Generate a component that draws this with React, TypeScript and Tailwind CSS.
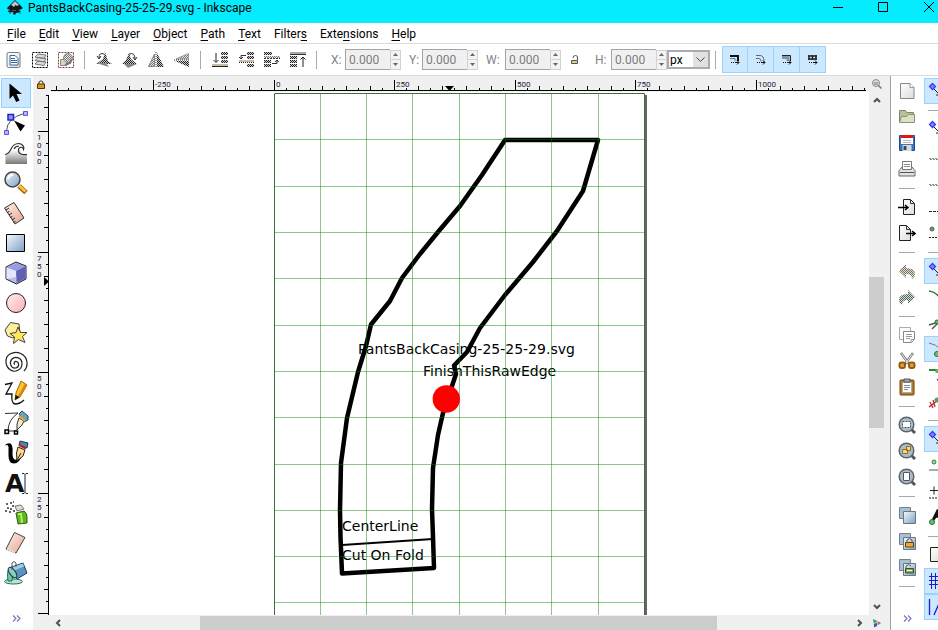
import { Fragment, type ReactNode } from "react";

type IconProps = { children: ReactNode; size?: "sm" | "md" };

function Icon({ children, size = "md" }: IconProps) {
  return (
    <svg
      viewBox={size === "md" ? "0 0 24 24" : "0 0 18 18"}
      className={size === "md" ? "h-6 w-6 shrink-0 overflow-visible" : "h-[18px] w-[18px] shrink-0"}
      fill="none"
      aria-hidden="true"
    >
      {children}
    </svg>
  );
}

function Defs() {
  return (
    <svg className="absolute h-0 w-0" aria-hidden="true">
      <defs>
        <pattern id="dither" width="2" height="2" patternUnits="userSpaceOnUse">
          <path d="M0 0h1v1H0zM1 1h1v1H1z" fill="#222" />
          <path d="M1 0h1v1H1zM0 1h1v1H0z" fill="#c9c9c9" />
        </pattern>
        <pattern id="dither-light" width="2" height="2" patternUnits="userSpaceOnUse">
          <path d="M0 0h1v1H0zM1 1h1v1H1z" fill="#777" />
          <path d="M1 0h1v1H1zM0 1h1v1H0z" fill="#e8e8e4" />
        </pattern>
        <pattern id="dither-olive" width="2" height="2" patternUnits="userSpaceOnUse">
          <path d="M0 0h1v1H0zM1 1h1v1H1z" fill="#76725f" />
          <path d="M1 0h1v1H1zM0 1h1v1H0z" fill="#e2dfd2" />
        </pattern>
        <pattern id="dither-green" width="2" height="2" patternUnits="userSpaceOnUse">
          <path d="M0 0h1v1H0zM1 1h1v1H1z" fill="#566656" />
          <path d="M1 0h1v1H1zM0 1h1v1H0z" fill="#d8e0d6" />
        </pattern>
        <linearGradient id="blue" x1="0" y1="0" x2="1" y2="1">
          <stop offset="0" stopColor="#f4f9fd" />
          <stop offset="1" stopColor="#7f9fc4" />
        </linearGradient>
        <linearGradient id="pink" x1="0" y1="0" x2="1" y2="1">
          <stop offset="0" stopColor="#ffeef0" />
          <stop offset="1" stopColor="#ffadb4" />
        </linearGradient>
        <linearGradient id="peach" x1="0" y1="0" x2="1" y2="1">
          <stop offset="0" stopColor="#fff1ec" />
          <stop offset="1" stopColor="#e6a38e" />
        </linearGradient>
        <linearGradient id="wave" x1="0" y1="0" x2="0" y2="1">
          <stop offset="0.3" stopColor="#ffffff" />
          <stop offset="1" stopColor="#777777" />
        </linearGradient>
        <linearGradient id="page" x1="0" y1="0" x2="1" y2="1">
          <stop offset="0" stopColor="#ffffff" />
          <stop offset="1" stopColor="#dcdcd8" />
        </linearGradient>
      </defs>
    </svg>
  );
}

/* ---- menu ---- */

const MENUS = [
  ["", "F", "ile"],
  ["", "E", "dit"],
  ["", "V", "iew"],
  ["", "L", "ayer"],
  ["", "O", "bject"],
  ["", "P", "ath"],
  ["", "T", "ext"],
  ["Filter", "s", ""],
  ["Exte", "n", "sions"],
  ["", "H", "elp"],
];

function TitleBar() {
  return (
    <header className="flex h-[23px] shrink-0 items-start bg-[#05ecff] pl-[6px]">
      <svg viewBox="0 0 18 16" className="h-4 w-[18px] shrink-0" aria-hidden="true">
        <path d="M9 0 16.500 7.500Q17 9 14.500 9.500L12 10l3 1-2 1.500-3 .5-1 2-2-1 .500-2-4 .500-2-1.500 3-1L1.500 9Q.500 8 2 7z" fill="#15161a" />
        <path d="M9 1 13 5 11 6 9.500 5 8 7 6 5.500 5 5z" fill="#b9c4cc" />
        <path d="M6 10.500h4M3 13h2M13 13h2" stroke="#45525c" />
      </svg>
      <h1 className="ml-1 flex-1 truncate text-xs leading-4">PantsBackCasing-25-25-29.svg - Inkscape</h1>
      <button aria-label="Minimize" className="flex h-4 w-[45px] items-center justify-center">
        <svg viewBox="0 0 10 10" className="h-[10px] w-[10px]"><path d="M0 4.500h10" stroke="#000" /></svg>
      </button>
      <button aria-label="Maximize" className="flex h-[14px] w-[45px] items-center justify-center">
        <svg viewBox="0 0 10 10" className="h-[10px] w-[10px]" fill="none"><path d="M.500 .500h9v9h-9z" stroke="#000" /></svg>
      </button>
      <button aria-label="Close" className="flex h-[14px] w-[33px] items-center justify-end pr-1">
        <svg viewBox="0 0 10 10" className="h-[10px] w-[10px]"><path d="M0 0 10 10M10 0 0 10" stroke="#000" /></svg>
      </button>
    </header>
  );
}

function MenuBar() {
  return (
    <nav aria-label="Main menu" className="flex h-[21px] shrink-0 items-center gap-px border-b border-[#dadada] pl-px pt-px">
      {MENUS.map(([before, key, after]) => (
        <button key={before + key + after} className="px-[6px] text-xs leading-5">
          {before}
          <span className="underline underline-offset-2">{key}</span>
          {after}
        </button>
      ))}
    </nav>
  );
}

/* ---- control bar ---- */

const SELECT_ACTIONS = [
  {
    label: "Select all",
    icon: (
      <>
        <rect x="2" y="1.500" width="13" height="15" rx="1.500" fill="url(#page)" stroke="#777b76" />
        <path d="M5 4.500h5l3 3V14H5z" fill="#fff" stroke="#3465a4" />
        <path d="M6 7.500h4M6 9.500h6M6 11.500h6" stroke="#3465a4" />
      </>
    ),
  },
  {
    label: "Select all in all layers",
    icon: (
      <>
        <rect x="1.500" y="1.500" width="15" height="15" stroke="#000" strokeDasharray="2 1" />
        <path d="m4 13 3-3 8 1-2 3.500zM4 9.500l3-3 8 1-2 3.500zM4 6l3-3 8 1-2 3.500z" fill="#ddd" stroke="#777" />
      </>
    ),
  },
  {
    label: "Deselect",
    icon: (
      <>
        <rect x="1.500" y="1.500" width="15" height="15" stroke="#854040" strokeDasharray="2 1" />
        <path d="M3.500 8.500h6v6h-6z" fill="#ded5b8" stroke="#888" />
        <circle cx="11" cy="7" r="4.500" fill="url(#dither-light)" stroke="#888" />
        <path d="m8 14 5-2 2-4" stroke="#777" strokeWidth="2" />
      </>
    ),
  },
];

const TRANSFORM_ACTIONS = [
  {
    label: "Rotate counter-clockwise",
    icon: (
      <>
        <path d="M1 13h16l-4-3-3-9-2 7z" fill="url(#dither)" />
        <path d="M1 12h10l3 4z" fill="#888" />
        <path d="M9 3Q4 1 4 7M2 5l2 3 2-3" stroke="#333" />
      </>
    ),
  },
  {
    label: "Rotate clockwise",
    icon: (
      <>
        <path d="M1 13h15l-6-5-2-6-3 7z" fill="url(#dither)" />
        <path d="M3 13h13l-9 4z" fill="#888" />
        <path d="M8 3q6-2 6 5M12 6l2 3 2-3" stroke="#333" />
      </>
    ),
  },
  {
    label: "Flip horizontal",
    icon: (
      <>
        <path d="M7.500 3v12.500H1.500z" fill="url(#dither-light)" stroke="#888" />
        <path d="M10 2v14h7z" fill="url(#dither)" />
        <path d="M9 1v16" stroke="#333" strokeDasharray="1 1" />
      </>
    ),
  },
  {
    label: "Flip vertical",
    icon: (
      <>
        <path d="M15.500 2.500v5.500H3z" fill="url(#dither-light)" stroke="#999" />
        <path d="M16 10v6L2 10z" fill="url(#dither)" />
        <path d="M1 9h16" stroke="#222" strokeDasharray="1 1" />
      </>
    ),
  },
];

const ORDER_ACTIONS = [
  {
    label: "Lower to bottom",
    icon: (
      <>
        <path d="M10 1h7v3h-7zM10 5h7v3h-7zM10 9h7v3h-7z" fill="url(#dither)" />
        <path d="M1 13h16v2H1z" fill="#c5bd9d" />
        <path d="M1 15.500h16M5 2v9M2.500 9 5 11.500 7.500 9" stroke="#222" />
      </>
    ),
  },
  {
    label: "Lower",
    icon: (
      <>
        <path d="M10 1h7v3h-7zM10 5h7v3h-7zM10 13h7v3h-7z" fill="url(#dither)" />
        <path d="M2 9h15v2H2z" fill="#c5bd9d" />
        <path d="M2 11.500h15" stroke="#222" strokeDasharray="1 1" />
        <path d="M9 4.500H4V8M2 6l2 2 2-2" stroke="#333" />
      </>
    ),
  },
  {
    label: "Raise",
    icon: (
      <>
        <path d="M1 1h8v3H1zM1 9h7v3H1zM1 13h7v3H1z" fill="url(#dither)" />
        <path d="M1 5h16v2H1z" fill="url(#dither-light)" />
        <path d="M1 7.500h16" stroke="#333" strokeDasharray="2 1" />
        <path d="M9 12.500h5V9M12 11l2-2 2 2" stroke="#333" />
      </>
    ),
  },
  {
    label: "Raise to top",
    icon: (
      <>
        <path d="M1 1h16v2H1z" fill="#aaa" />
        <path d="M1 3.500h16" stroke="#333" />
        <path d="M1 5h7v3H1zM1 9h7v3H1zM1 13h7v3H1z" fill="url(#dither)" />
        <path d="M14 16V6M11.500 8.500 14 6l2.500 2.500" stroke="#222" />
      </>
    ),
  },
];

const SCALE_TOGGLES = [
  {
    label: "Scale stroke width",
    icon: (
      <>
        <path d="M4 5h8v5" stroke="#111" strokeWidth="2" />
        <path d="M4 7.500h5V10" stroke="#777" />
      </>
    ),
  },
  {
    label: "Scale rounded corners",
    icon: <path d="M4 4.500h4q4 0 4 6M4 7.500h3q2 0 2 3" stroke="#667" />,
  },
  {
    label: "Move gradients",
    icon: (
      <>
        <path d="M4 6.500h6V10" stroke="#8493a8" strokeWidth="3" />
        <path d="M4 4.500h8.500V10" stroke="#222" />
      </>
    ),
  },
  {
    label: "Move patterns",
    icon: <path d="M4 5h9M4 8h9M5 4v5M8.500 4v5M12 4v5" stroke="#222" strokeWidth="1.500" />,
  },
];

type Action = { label: string; icon: ReactNode };

function ActionGroup({ actions }: { actions: Action[] }) {
  return (
    <div className="flex">
      {actions.map((a) => (
        <button key={a.label} aria-label={a.label} className="flex h-7 w-[26px] items-center justify-center">
          <Icon size="sm">{a.icon}</Icon>
        </button>
      ))}
    </div>
  );
}

function Divider() {
  return <div className="ml-[5px] mr-[6px] h-[18px] w-px shrink-0 bg-[#aaa]" />;
}

function NumberField({ name, width }: { name: string; width: string }) {
  return (
    <div className="flex items-center">
      <label htmlFor={`field-${name}`} className={`${width} shrink-0 text-xs text-[#80848a]`}>
        {name}:
      </label>
      <input
        id={`field-${name}`}
        defaultValue="0.000"
        className="h-[21px] w-[45px] rounded-none border border-r-0 border-[#a4a4a4] bg-[#f0f0f0] px-[3px] text-xs text-[#7c7c7c] outline-none"
      />
      <div className="flex h-5 w-[11px] flex-col border border-[#d2d2d2] bg-[#f3f3f3]">
        <button aria-label={`Increase ${name}`} className="flex flex-1 items-center justify-center border-b border-[#d2d2d2]">
          <svg viewBox="0 0 5 3" className="h-[3px] w-[5px]"><path d="M0 3 2.500 0 5 3z" fill="#666" /></svg>
        </button>
        <button aria-label={`Decrease ${name}`} className="flex flex-1 items-center justify-center">
          <svg viewBox="0 0 5 3" className="h-[3px] w-[5px]"><path d="M0 0 2.500 3 5 0z" fill="#666" /></svg>
        </button>
      </div>
    </div>
  );
}

function ControlBar() {
  return (
    <div role="toolbar" aria-label="Selection controls" className="flex h-8 shrink-0 items-center border-b border-[#dadada] pl-px">
      <ActionGroup actions={SELECT_ACTIONS} />
      <Divider />
      <ActionGroup actions={TRANSFORM_ACTIONS} />
      <Divider />
      <ActionGroup actions={ORDER_ACTIONS} />
      <Divider />
      <div className="flex items-center pl-2">
        <div className="flex gap-2">
          <NumberField name="X" width="w-[14px]" />
          <NumberField name="Y" width="w-[13px]" />
          <NumberField name="W" width="w-[19px]" />
        </div>
        <button aria-label="Lock width and height" className="flex h-7 w-[34px] items-center justify-center pr-[6px]">
          <svg viewBox="0 0 10 12" className="h-3 w-[10px]" fill="none">
            <path d="M3 4q0-2.500 2.500-2.500T7.500 4v2" stroke="#555" />
            <path d="M1.500 6.500h6v3h-6z" fill="#e6cf7c" stroke="#555" />
          </svg>
        </button>
        <NumberField name="H" width="w-4" />
        <div className="relative h-[19px] w-[43px]">
          <select aria-label="Unit" defaultValue="px" className="block h-full w-full appearance-none rounded-none border-2 border-[#aaaab2] bg-white pl-px text-xs leading-none outline-none">
            <option>px</option>
            <option>mm</option>
            <option>in</option>
          </select>
          <span className="pointer-events-none absolute inset-y-[2px] right-[2px] flex w-[15px] items-center justify-center bg-[#e1e1e1]">
            <svg viewBox="0 0 9 5" className="h-[5px] w-[9px]" fill="none"><path d="m.500 .500 4 4 4-4" stroke="#444" /></svg>
          </span>
        </div>
      </div>
      <Divider />
      <div className="flex">
        {SCALE_TOGGLES.map((t, i) => (
          <button
            key={t.label}
            aria-label={t.label}
            aria-pressed="true"
            className={`flex h-[27px] items-center justify-center border border-[#99d1ff] bg-[#cce8ff] ${i === 0 ? "w-[26px]" : "w-[26px] border-l-0"}`}
          >
            <Icon size="sm">
              {t.icon}
              <path d="M5 11.500h5" stroke="#111" strokeDasharray="1 1" />
              <path d="M10 11.500h3M11 9.500l2 2-2 2" stroke="#111" />
            </Icon>
          </button>
        ))}
      </div>
    </div>
  );
}

/* ---- toolbox ---- */

const TOOLS: Action[] = [
  { label: "Select", icon: <path d="M5.500 2.500V18l3.500-3.500 3.200 6.500 3.300-1.500-3-6.500H18z" fill="#000" /> },
  {
    label: "Edit nodes",
    icon: (
      <>
        <path d="M2.500 20Q3 7 20 2.500" stroke="#555" />
        <path d="M4 3.500h5.500V9H4z" fill="#8c94ff" stroke="#2222cc" strokeWidth="1.500" />
        <path d="M19.500.500h4v4h-4zM.500 19.500h4v4h-4z" fill="#b4b4ff" stroke="#5555dd" />
        <path d="m10 9.500 11 5-4.500 6z" fill="#000" />
      </>
    ),
  },
  {
    label: "Tweak",
    icon: (
      <>
        <path d="M1.500 23V13C6 13 6 9 8.500 5.500 11 2 17 1 19.500 5.500c.5 1 .5 2 0 3-.5-3-4-3-5-.5 3-1 4 3 1.500 4 2 1.500 4 .5 7 1V23z" fill="url(#wave)" />
        <path d="M1 13.500C6 13 6 9 8.500 5.500 11 2 17 1 19.500 5.500c.5 1 .5 2 0 3-.5-3-4.500-3-5 0-.5 4 3 5.500 8.500 5M10 8c1-2 3-3 5-3" stroke="#333" strokeWidth="1.200" />
      </>
    ),
  },
  {
    label: "Zoom",
    icon: (
      <>
        <path d="m15 15 7 6.500" stroke="#996515" strokeWidth="5" />
        <path d="m15 14.500 6.500 6" stroke="#ffc040" strokeWidth="3" />
        <circle cx="8.500" cy="8.500" r="7.500" fill="url(#blue)" stroke="#444" strokeWidth="1.500" />
        <path d="M4 8q1-4 5-4" stroke="#fff" strokeWidth="2" />
      </>
    ),
  },
  {
    label: "Measure",
    icon: (
      <>
        <path d="M.500 7 10 1.500 20 17l-9 6z" fill="url(#peach)" stroke="#333" />
        <path d="m2 9 3-2m-1.500 4.500 2-1.200M5 14l3-2m-1.500 4.500 2-1.200M8 19l3-2m-1.500 4.500 2-1.200" stroke="#222" />
      </>
    ),
  },
  { label: "Rectangle", icon: <path d="M2.500 3.500h18v17h-18z" fill="url(#blue)" stroke="#000" /> },
  {
    label: "3D box",
    icon: (
      <>
        <path d="m2 6 10-5 10 4v13l-9.500 5L2 18z" fill="#b9bcf0" stroke="#222" />
        <path d="m2.500 6.500 9.500-4V16l-9.500 2z" fill="#e4e5fb" />
        <path d="m12 2.500 9.500 3v12L12 15z" fill="#7f83cf" />
        <path d="m2.500 6.500 9.500-4 9.500 3-9 4.500z" fill="#9a9de0" />
        <path d="M12.500 10 21.500 5.500v12L12.500 22z" fill="#5e61b4" />
      </>
    ),
  },
  { label: "Ellipse", icon: <circle cx="12" cy="12" r="9.500" fill="url(#pink)" stroke="#222" /> },
  {
    label: "Star",
    icon: (
      <>
        <path d="M1 9 6.500 1.500 15 3l1 9-7 5-5.500-2z" fill="#ffee9b" stroke="#444" />
        <path d="m14 6 2.500 5.500 6.500 0-4.500 4 2.500 6-6.500-3-5 4 1-6.500-4.500-3.500 6-1z" fill="#ffe75c" stroke="#444" />
      </>
    ),
  },
  {
    label: "Spiral",
    icon: <path d="M11 13.500c-2-1-.5-3.500 1.500-3 3 .8 3 6-1 6.500-5 .5-6.500-6-3.500-9C11.500 4.500 18 7 18 12.500 18 19 11 22 6.500 19 .5 15 .5 6 6 3c7-4 16 0 17 8 .4 4-1 7-3 9" stroke="#222" strokeWidth="1.200" />,
  },
  {
    label: "Pencil",
    icon: (
      <>
        <path d="M1 3.500 8 2 2 13h6q-1 9 3 10 5 0 9-4" stroke="#111" strokeWidth="1.300" />
        <path d="m17 0 6 4-7 12-5 3 1-7z" fill="#ffc32e" stroke="#9a680d" />
        <path d="m21 2.500 2 1.500-7 12-2-1z" fill="#d88a08" />
        <path d="m11 19 .5-5 4 2z" fill="#111" />
      </>
    ),
  },
  {
    label: "Bezier pen",
    icon: (
      <>
        <path d="M1 2.500 14 2Q4 9 4 20h8" stroke="#333" />
        <path d="m15 3 3-3 6 5v4l-4 2z" fill="#6ba3c2" stroke="#27465a" />
        <path d="m15 7 5 3-2 4-5 5 0-6z" fill="#f3e9ca" stroke="#333" />
        <path d="m15 5 6 5" stroke="#e8aa22" strokeWidth="2" />
        <path d="M1 19h3.500v3.500H1zM10.500 20h3v3h-3z" fill="#fff" stroke="#000" strokeWidth="1.500" />
      </>
    ),
  },
  {
    label: "Calligraphy",
    icon: (
      <>
        <path d="M1.500 3.500q5-3 6.500 1 1 3 .5 8 0 7 4 6l6-5q-3 9-8.500 9-5.500 0-5.500-8V6Q4 3 1.500 4.500z" fill="#000" />
        <path d="m16 0 8 2-1 5-8-3z" fill="#4c86b3" stroke="#17384e" />
        <path d="m15 4 7 3.500" stroke="#b42318" strokeWidth="2" />
        <path d="m14 6 7 3-2 6-6 5-.5-8z" fill="#ffd98a" stroke="#222" />
        <path d="m13 19 4-7" stroke="#222" />
      </>
    ),
  },
  {
    label: "Text",
    icon: (
      <>
        <text x="1" y="21" fontFamily="DejaVu Sans" fontWeight="700" fontSize="25" fill="#111">A</text>
        <path d="M18 2.500h2l1 1 1-1h2M18 22.500h2l1-1 1 1h2M21 3.500v18" stroke="#222" />
      </>
    ),
  },
  {
    label: "Spray",
    icon: (
      <>
        <path d="m12 12 8-2q3 2 3 6v6l-9 1z" fill="#61b51d" stroke="#315d0c" />
        <path d="m14 13 3 0 1 9" stroke="#b6ed70" strokeWidth="2" />
        <path d="m11 5 6-1 3 4-7 2z" fill="#ddd" stroke="#777" />
        <path d="M2 3h2M6 2h2M8 5h2M3 7h2M6 8h2M1 10h2M9 10h2M5 11h2M9 1h1" stroke="#333" strokeWidth="1.500" />
      </>
    ),
  },
  {
    label: "Eraser",
    icon: (
      <>
        <path d="M2 18 10.500 1.500 21 6.500 12 22z" fill="url(#peach)" stroke="#444" />
        <path d="m3 18 8 3.500" stroke="#fff" />
      </>
    ),
  },
  {
    label: "Paint bucket",
    icon: (
      <>
        <ellipse cx="9.500" cy="20.500" rx="9" ry="2.500" fill="#b5e4cf" stroke="#286f59" />
        <path d="M4 9q-1 7 0 11h4q0-5 2-8z" fill="#6fc7a7" stroke="#286f59" />
        <path d="m5 7 14-5 4 10-10 6z" fill="#5b93c0" stroke="#163a57" />
        <path d="m9 6 10-3.500 1 3-10 4z" fill="#a5cde6" />
        <ellipse cx="8.500" cy="11.500" rx="2.800" ry="6" transform="rotate(-35 8.500 11.500)" fill="#8fd0bb" stroke="#163a57" />
        <path d="M8 9V2q2-3 4 0v4" stroke="#555" />
      </>
    ),
  },
];

function More() {
  return (
    <button aria-label="More" className="flex h-5 w-full items-center justify-center">
      <svg viewBox="0 0 9 7" className="h-[7px] w-[9px]" fill="none">
        <path d="m1 .500 3 3-3 3M5 .500l3 3-3 3" stroke="#7777b8" strokeWidth="1.200" />
      </svg>
    </button>
  );
}

function Toolbox() {
  return (
    <div role="toolbar" aria-label="Tools" className="flex w-[33px] shrink-0 flex-col pl-px pt-[2px]">
      {TOOLS.map((t, i) => (
        <button
          key={t.label}
          aria-label={t.label}
          className={`flex h-[30px] w-[30px] shrink-0 items-center justify-center ${i === 0 ? "border border-[#99d1ff] bg-[#cce8ff]" : ""}`}
        >
          <Icon>{t.icon}</Icon>
        </button>
      ))}
      <div className="mt-5 w-[30px]">
        <More />
      </div>
    </div>
  );
}

/* ---- canvas and rulers ---- */

const STEP = 12.06;

function tickLength(i: number) {
  if (i % 10 === 0) return 11;
  return i % 2 === 0 ? 5 : 3;
}

function HorizontalRuler() {
  const ticks = Array.from({ length: 68 }, (_, n) => n - 18);
  return (
    <svg className="h-4 w-full bg-[#f0f0f0]" aria-hidden="true">
      <path d="M2 14.500H817" stroke="#000" />
      {ticks.map((i) => {
        const x = Math.floor(225 + i * STEP);
        return x > 2 && x < 818 ? <rect key={i} x={x} y={15 - tickLength(i)} width="1" height={tickLength(i)} /> : null;
      })}
      {[-250, 0, 250, 500, 750, 1000].map((v) => (
        <text key={v} x={Math.floor(227 + (v / 25) * STEP)} y="11" fontSize="8" fill="#202038">
          {v}
        </text>
      ))}
      <path d="M396 10h9l-4.500 5z" fill="#000" />
    </svg>
  );
}

function VerticalRuler() {
  const ticks = Array.from({ length: 44 }, (_, n) => n - 3);
  return (
    <svg className="h-full w-4 bg-[#f0f0f0]" aria-hidden="true">
      <path d="M15.500 3V523" stroke="#000" />
      {ticks.map((i) => (
        <rect key={i} x={16 - tickLength(i)} y={Math.round(39 + i * STEP)} width={tickLength(i)} height="1" />
      ))}
      {["1000", "750", "500", "250"].map((label, n) => (
        <text key={label} y={Math.round(48 + n * 10 * STEP)} fontSize="8" fill="#202038">
          {label.split("").map((digit, d) => (
            <tspan key={d} x="4" dy={d === 0 ? 0 : 8}>
              {digit}
            </tspan>
          ))}
        </text>
      ))}
      <path d="M11 185v9l5-4.500z" fill="#000" />
    </svg>
  );
}

const GRID = 46.3;

function Drawing() {
  const columns = Array.from({ length: 7 }, (_, n) => Math.round(273.5 + (n + 1) * GRID) + 0.5);
  const rows = Array.from({ length: 11 }, (_, n) => Math.round(139.4 + n * GRID) + 0.5);
  return (
    <svg className="h-full w-full bg-white" role="img" aria-label="Pattern drawing">
      <g transform="translate(-49 -92)" fill="none">
        <path d="M645 95h2v520h-2z" fill="#666" />
        <path
          d="M505 140H598L583 191 557 231 533 262 505 295 480 328 467 352 454 365.500 456 374 443 413 438 435 433 468 432 509 433 537 434 568 342 573.500 340.500 537 340 510 341 463 347 418 358 372 366 346 371 324.500 390 301 402 278 420 254 438 232 460 206 482 175z"
          stroke="#000"
          strokeWidth="4.500"
          strokeLinejoin="round"
        />
        <path d="m342 545 91-6" stroke="#000" strokeWidth="2" />
        <g fill="#000" fontFamily="DejaVu Sans, Verdana, sans-serif" fontSize="14">
          <text x="358" y="354">PantsBackCasing-25-25-29.svg</text>
          <text x="423" y="376">FinishThisRawEdge</text>
          <text x="342" y="531">CenterLine</text>
          <text x="342" y="560">Cut On Fold</text>
        </g>
        <g stroke="#008000" strokeOpacity="0.45">
          {columns.map((x) => (
            <path key={x} d={`M${x} 94V615`} />
          ))}
          {rows.map((y) => (
            <path key={y} d={`M274 ${y}H645`} />
          ))}
        </g>
        <circle cx="446.300" cy="399" r="13.700" fill="#f00" />
        <path d="M274.500 615V93.500H644.500V615" stroke="#3c6e3c" />
      </g>
    </svg>
  );
}

function Chevron({ d }: { d: string }) {
  return (
    <svg viewBox="0 0 8 8" className="h-2 w-2 shrink-0" fill="none" aria-hidden="true">
      <path d={d} stroke="#505050" strokeWidth="2" />
    </svg>
  );
}

function Desk() {
  return (
    <main className="grid min-w-0 flex-1 grid-cols-[16px_minmax(0,1fr)_21px] grid-rows-[16px_minmax(0,1fr)_15px] bg-[#f0f0f0]">
      <button aria-label="Lock guides" className="flex items-center justify-center">
        <svg viewBox="0 0 8 9" className="h-[9px] w-2" fill="none">
          <path d="M2 4V2q2-2.500 4 0v2" stroke="#333" />
          <path d="M.500 4h7v4.500h-7z" fill="#d99a24" stroke="#4d3200" />
        </svg>
      </button>
      <HorizontalRuler />
      <button aria-label="Zoom drawing" className="flex items-center pl-[3px]">
        <svg viewBox="0 0 10 10" className="h-[10px] w-[10px]" fill="none">
          <circle cx="4" cy="4" r="3.500" fill="#ddd" stroke="#888" />
          <path d="M3 3v3M5 3v3" stroke="#777" />
          <path d="m6.500 6.500 3 3" stroke="#777" strokeWidth="1.500" />
        </svg>
      </button>

      <VerticalRuler />
      <Drawing />
      <div className="flex w-[15px] flex-col items-center py-1">
        <Chevron d="m1 6 3-3 3 3" />
        <div className="flex w-full flex-1 flex-col pb-3 pt-[173px]">
          <div className="h-[151px] bg-[#cdcdcd]" />
        </div>
        <Chevron d="m1 2 3 3 3-3" />
      </div>

      <div />
      <div className="flex items-center px-[5px]">
        <Chevron d="M6 1 3 4l3 3" />
        <div className="flex h-[14px] flex-1 pl-[138px] pr-[138px]">
          <div className="h-full w-[517px] bg-[#cdcdcd]" />
        </div>
        <Chevron d="m2 1 3 3-3 3" />
      </div>
      <button aria-label="Color management" className="flex items-center pl-[3px]">
        <svg viewBox="0 0 10 10" className="h-[10px] w-[10px]">
          <path d="M1 1 9 5 2 9z" fill="#9cc7b4" />
          <path d="M1 1 5 3 2 5z" fill="#2fa34d" />
          <path d="m2 6 3-1 0 3-3 1.500z" fill="#4355b5" />
          <path d="m6 3.500 3 1.500-3 2z" fill="#cf5a74" />
        </svg>
      </button>
    </main>
  );
}

/* ---- command bar ---- */

function Lens({ children }: { children: ReactNode }) {
  return (
    <>
      <path d="m13 13 4 4" stroke="#555" strokeWidth="3" />
      <circle cx="8.500" cy="8.500" r="7.300" fill="#a9bccd" stroke="#5d6468" strokeWidth="1.500" />
      {children}
    </>
  );
}

function TwoSheets({ children }: { children?: ReactNode }) {
  return (
    <>
      <path d="M1.500 1.500h11v11h-11z" fill="#a9bfd3" stroke="#77828c" />
      <path d="M5.500 5.500h12v12h-12z" fill="url(#blue)" stroke="#6b7680" />
      {children}
    </>
  );
}

const COMMANDS: Action[][] = [
  [
    {
      label: "New",
      icon: (
        <>
          <path d="M2.500 1.500H12l4 4v11h-13.500z" fill="url(#page)" stroke="#888" />
          <path d="M12 1.500v4h4" fill="#fff" stroke="#999" />
        </>
      ),
    },
    {
      label: "Open",
      icon: (
        <>
          <path d="M1.500 2.500h6l1 2h7v9h-14z" fill="#b6c09d" stroke="#7c8668" />
          <path d="M3.500 8.500h5l2-2h6v8h-15z" fill="#dbe2c4" stroke="#8a9373" />
        </>
      ),
    },
    {
      label: "Save",
      icon: (
        <>
          <path d="M1.500 1.500h15v15h-15z" fill="#3775bd" stroke="#204a87" />
          <path d="M3 2h12v8H3z" fill="#fff" />
          <path d="M3 1h12v3H3z" fill="#e01717" />
          <path d="M5 6.500h8M5 8.500h8" stroke="#bbb" />
          <path d="M4.500 11h9v6h-9z" fill="#d7dce0" />
          <path d="M5.500 12h3v4h-3z" fill="#364a63" />
        </>
      ),
    },
    {
      label: "Print",
      icon: (
        <>
          <path d="M2 9.500 4 7h10l2 2.500 1 1V16H1v-5.500z" fill="#e2e2df" stroke="#666" />
          <path d="M4.500 1.500h9v8h-9z" fill="#fff" stroke="#777" />
          <path d="M6 4.500h6M6 6.500h6" stroke="#888" />
          <path d="M2 12.500h14" stroke="#555" />
        </>
      ),
    },
  ],
  [
    {
      label: "Import",
      icon: (
        <>
          <path d="M5.500 1.500h7l4 4v11h-11z" fill="url(#page)" stroke="#222" />
          <path d="M12.500 1.500v4h4" stroke="#333" />
          <path d="M0 9.500h9M7 7l3 2.500L7 12" stroke="#000" strokeWidth="1.500" />
        </>
      ),
    },
    {
      label: "Export",
      icon: (
        <>
          <path d="M1.500 1.500h7l4 4v11h-11z" fill="url(#page)" stroke="#222" />
          <path d="M8.500 1.500v4h4" stroke="#333" />
          <path d="M8 9.500h9M14 7l3 2.500-3 2.500" stroke="#000" strokeWidth="1.500" />
        </>
      ),
    },
  ],
  [
    {
      label: "Undo",
      icon: <path d="m1 9 7-7v4q9 0 9 6 0 3-3 5 0-5-6-5v4z" fill="url(#dither-olive)" />,
    },
    {
      label: "Redo",
      icon: <path d="m17 9-7-7v4q-9 0-9 6 0 3 3 5 0-5 6-5v4z" fill="url(#dither-green)" />,
    },
  ],
  [
    {
      label: "Copy",
      icon: (
        <>
          <path d="M1.500 1.500h11v12h-11z" fill="#fafafa" stroke="#aaa" />
          <path d="M5.500 5.500h11v8l-3 3h-8z" fill="#fff" stroke="#888" />
          <path d="M8 8.500h6M8 10.500h6M8 12.500h4M16 13.500h-3v3" stroke="#999" />
        </>
      ),
    },
    {
      label: "Cut",
      icon: (
        <>
          <path d="M3 1 11 12M15 1 7 12" stroke="#777" strokeWidth="2.500" />
          <path d="M3.500 1.500 10 11M14.500 1.500 8 11" stroke="#eee" />
          <rect x="1.500" y="10.500" width="5.500" height="5.500" rx="2" fill="#d9a04a" stroke="#9a5c0b" strokeWidth="2" />
          <rect x="11" y="10.500" width="5.500" height="5.500" rx="2" fill="#d9a04a" stroke="#9a5c0b" strokeWidth="2" />
        </>
      ),
    },
    {
      label: "Paste",
      icon: (
        <>
          <rect x="2" y="2" width="14" height="15" rx="1" fill="#b77a28" stroke="#71430b" />
          <path d="M4.500 4.500h9v10h-9z" fill="#fff" stroke="#aaa" />
          <path d="M6 1h6v3H6z" fill="#aaa" stroke="#555" />
          <path d="M6 7.500h6M6 9.500h6M6 11.500h4" stroke="#888" />
        </>
      ),
    },
  ],
  [
    { label: "Zoom selection", icon: <Lens><rect x="4.500" y="5.500" width="8" height="6" fill="#fff" stroke="#555" strokeDasharray="2 1" /></Lens> },
    {
      label: "Zoom drawing to fit",
      icon: <Lens><path d="M4.500 7.500h5v4h-5zM8.500 4.500h4v4h-4z" fill="#ffd978" stroke="#91701f" /></Lens>,
    },
    { label: "Zoom page", icon: <Lens><path d="M5.500 4.500h6v8h-6z" fill="#fff" stroke="#555" /></Lens> },
  ],
  [
    { label: "Duplicate", icon: <TwoSheets /> },
    {
      label: "Clone",
      icon: (
        <TwoSheets>
          <path d="M9 10V8q2.500-3 5 0v2" stroke="#555" />
          <path d="M7.500 10.500h8V15h-8z" fill="#f0a734" stroke="#65440e" />
        </TwoSheets>
      ),
    },
    {
      label: "Unlink clone",
      icon: (
        <TwoSheets>
          <path d="M8 10V8q2.500-3 5 0" stroke="#555" />
          <path d="M7.500 10.500h8V15h-8z" fill="#83ab55" stroke="#34551b" />
          <path d="M9 12.500h5" stroke="#fff" />
        </TwoSheets>
      ),
    },
  ],
];

function CommandBar() {
  return (
    <div role="toolbar" aria-label="Commands" className="flex w-[33px] shrink-0 flex-col items-center border-l border-[#a0a0a0] pt-[2px]">
      {COMMANDS.map((group) => (
        <Fragment key={group[0].label}>
          {group.map((c) => (
            <button key={c.label} aria-label={c.label} className="flex h-[26px] w-[26px] shrink-0 items-center justify-center">
              <Icon size="sm">{c.icon}</Icon>
            </button>
          ))}
          <div className="flex h-3 w-4 shrink-0 items-center">
            <div className="h-px w-full bg-[#a8a8a8]" />
          </div>
        </Fragment>
      ))}
      <div className="mt-4 w-full">
        <More />
      </div>
    </div>
  );
}

/* ---- snap bar ---- */

const SNAP_MASTER = (
  <>
    <path d="m6 7 6 6M12 9v4H8" stroke="#222" />
    <path d="m4.500 1.500 3 3-3 3-3-3z" fill="#7f83ff" stroke="#3a3aee" strokeWidth="1.300" />
  </>
);

const SNAPS: { label: string; on?: boolean; icon: ReactNode }[][] = [
  [{ label: "Enable snapping", on: true, icon: SNAP_MASTER }],
  [
    { label: "Snap bounding boxes", icon: SNAP_MASTER },
    { label: "Snap to box edges", icon: <path d="M1 12.500h14M2 13.500h14" stroke="#7c927c" strokeDasharray="2 1" /> },
    { label: "Snap to box corners", icon: <path d="M1 12.500h14M2 13.500h14" stroke="#8a8a8a" strokeDasharray="2 1" /> },
    { label: "Snap to edge midpoints", icon: <path d="M1 13.500h12" stroke="#222" strokeDasharray="3 1" /> },
    {
      label: "Snap to box centers",
      icon: (
        <>
          <circle cx="4" cy="5" r="2" fill="#719078" stroke="#456d50" />
          <path d="M1 13.500h12" stroke="#222" strokeDasharray="2 1" />
        </>
      ),
    },
  ],
  [
    { label: "Snap nodes", on: true, icon: SNAP_MASTER },
    { label: "Snap to paths", icon: <path d="M1 3q8 1 12 9" stroke="#187c28" strokeWidth="1.500" /> },
    {
      label: "Snap to intersections",
      icon: (
        <>
          <path d="M1 11 14 7M4 15l9-9" stroke="#555" strokeWidth="1.500" />
          <circle cx="9" cy="8" r="2" fill="#6faf79" stroke="#177e2c" />
        </>
      ),
    },
    {
      label: "Snap to cusp nodes",
      on: true,
      icon: (
        <>
          <path d="M1 3q7 1 12 7" stroke="#777" />
          <circle cx="9" cy="14" r="2.500" fill="#75b783" stroke="#167c2a" />
        </>
      ),
    },
    {
      label: "Snap to smooth nodes",
      icon: (
        <>
          <path d="M1 4h9q3 0 3 5" stroke="#238535" strokeWidth="2" />
          <circle cx="9" cy="5" r="2" fill="#67aa72" />
          <path d="m9 14 4-2" stroke="#444" strokeWidth="1.500" />
        </>
      ),
    },
    {
      label: "Snap to line midpoints",
      icon: (
        <>
          <path d="m2 10 3 6M5 8l2 7M1 15l8-6" stroke="#c2232f" strokeWidth="1.300" />
          <circle cx="9" cy="8" r="2.500" fill="#4f9e63" />
        </>
      ),
    },
  ],
  [
    { label: "Snap other points", on: true, icon: SNAP_MASTER },
    {
      label: "Snap to object midpoints",
      icon: (
        <>
          <circle cx="6" cy="6" r="2" fill="#9fd4a7" stroke="#28843a" />
          <path d="M1 14h14" stroke="#aaa" strokeWidth="2" />
        </>
      ),
    },
    {
      label: "Snap to rotation centers",
      icon: (
        <>
          <path d="M2 8.500h8M6 4.500v8" stroke="#222" />
          <path d="M1 16h14" stroke="#666" strokeWidth="1.500" strokeDasharray="2 1" />
        </>
      ),
    },
    {
      label: "Snap to text baselines",
      icon: (
        <>
          <path d="M3 13 9 1l5 2v10h-2V9l-4 1-2 3z" fill="#111" />
          <circle cx="4" cy="14" r="2.500" fill="#75b783" stroke="#167c2a" />
        </>
      ),
    },
  ],
  [
    { label: "Snap to page border", icon: <path d="M2.500 1.500h14v14h-14z" fill="url(#page)" stroke="#222" /> },
    { label: "Snap to grids", on: true, icon: <path d="M3.500 1v16M7.500 1v16M11.500 1v16M1 4.500h16M1 8.500h16M1 12.500h16" stroke="#1a1ad0" /> },
    { label: "Snap to guides", on: true, icon: <path d="M1.500 1v16M6 17 13 1" stroke="#1a1ad0" strokeWidth="1.300" /> },
  ],
];

function SnapBar() {
  return (
    <div role="toolbar" aria-label="Snapping" className="flex w-[15px] shrink-0 flex-col overflow-hidden pl-px pt-[2px]">
      {SNAPS.map((group, g) => (
        <Fragment key={group[0].label}>
          {g > 0 && (
            <div className="flex h-3 shrink-0 items-center pl-1">
              <div className="h-px w-full bg-[#a8a8a8]" />
            </div>
          )}
          {group.map((s) => (
            <button
              key={s.label}
              aria-label={s.label}
              aria-pressed={!!s.on}
              className={`flex h-[26px] w-[26px] shrink-0 items-center justify-center border ${s.on ? "border-[#99d1ff] bg-[#cce8ff]" : "border-transparent"}`}
            >
              <Icon size="sm">{s.icon}</Icon>
            </button>
          ))}
        </Fragment>
      ))}
    </div>
  );
}

export default function App() {
  return (
    <div className="flex h-screen flex-col overflow-hidden bg-white font-['Roboto','Open_Sans',sans-serif] text-black">
      <Defs />
      <TitleBar />
      <MenuBar />
      <ControlBar />
      <div className="flex min-h-0 flex-1">
        <Toolbox />
        <Desk />
        <CommandBar />
        <SnapBar />
      </div>
    </div>
  );
}
